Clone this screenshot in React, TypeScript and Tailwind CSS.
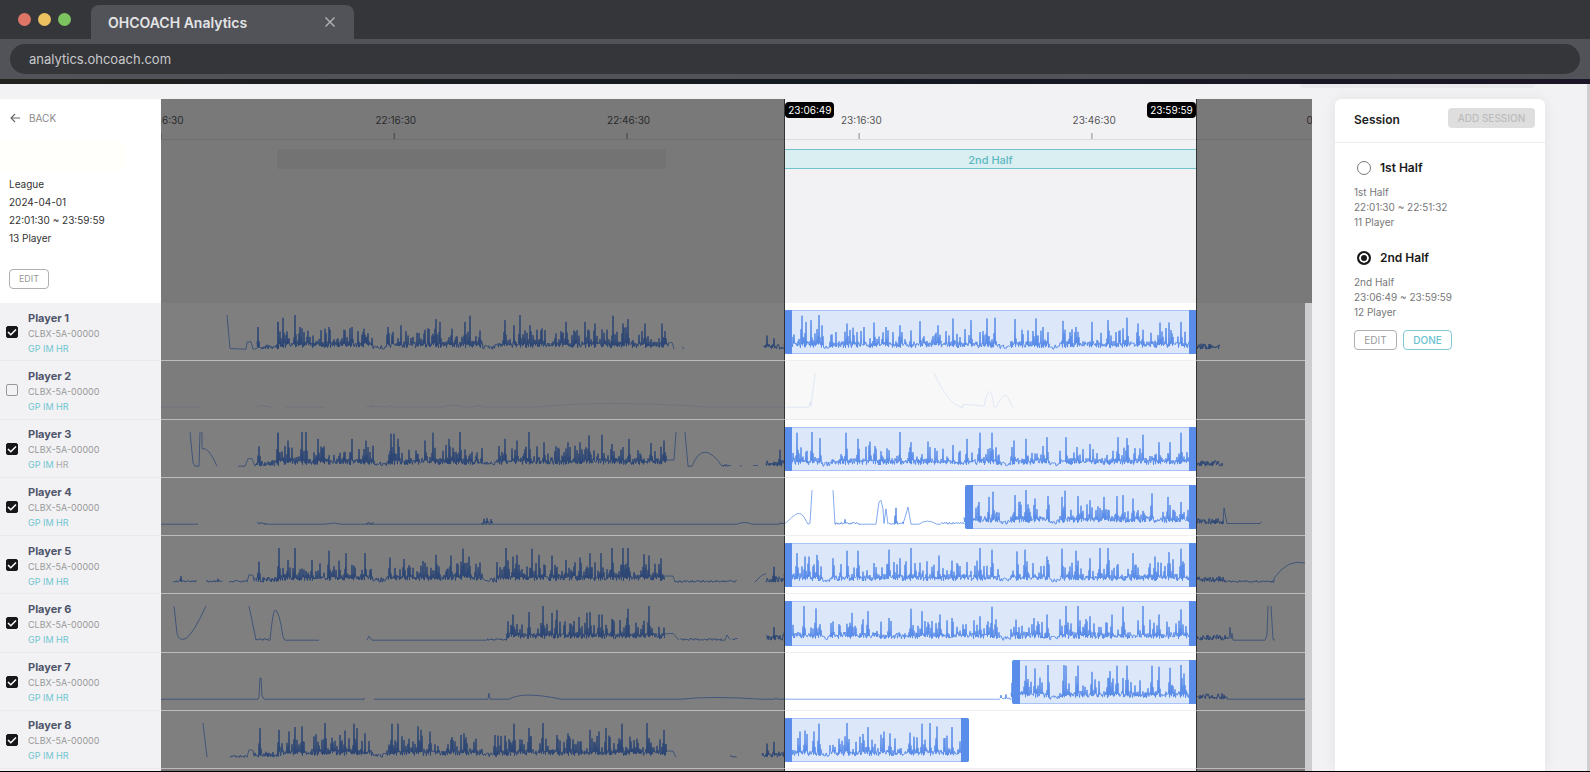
import { useState } from 'react'

type Session = {
  id: string
  name: string
  start: string
  end: string
  players: number
}

type Peak = [x: number, height: number]

type Segment = {
  from: number
  to: number
  kind: 'busy' | 'low' | 'tiny'
}

type Player = {
  name: string
  checked: boolean
  hr: boolean
  range?: [string, string]
  segments: Segment[]
  peaks: Peak[]
  strokes: string
}

// Visible window of the timeline, counted in minutes of the day
const AXIS_START = 21 * 60 + 46.5
const UNITS_PER_MINUTE = 7.76
const AXIS_UNITS = 1151

const TICKS = ['21:46:30', '22:16:30', '22:46:30', '23:16:30', '23:46:30', '24:16:30']

const SESSIONS: Session[] = [
  { id: 'first', name: '1st Half', start: '22:01:30', end: '22:51:32', players: 11 },
  { id: 'second', name: '2nd Half', start: '23:06:49', end: '23:59:59', players: 12 },
]

const QUIET = [[211, 226], [321, 336], [660, 669], [838, 850], [888, 899]]

const busy = (from: number, to: number): Segment => ({ from, to, kind: 'busy' })
const low = (from: number, to: number): Segment => ({ from, to, kind: 'low' })
const tiny = (from: number, to: number): Segment => ({ from, to, kind: 'tiny' })

// Stroke paths and peaks are in timeline units across and 0-100 percent up
const PLAYERS: Player[] = [
  {
    name: 'Player 1',
    checked: true,
    hr: true,
    range: ['23:06:49', '23:59:59'],
    segments: [low(96, 117), busy(117, 507), low(603, 623), busy(623, 1034), low(1034, 1058)],
    peaks: [[97, 65], [117, 80], [122, 92], [134, 100], [139, 65], [164, 60], [168, 65], [184, 55], [191, 65], [203, 60], [227, 65], [240, 70], [275, 88], [279, 80], [291, 60], [304, 80], [309, 98], [319, 55], [344, 85], [353, 70], [359, 100], [369, 70], [405, 80], [424, 80], [434, 75], [452, 98], [462, 75], [467, 88], [484, 75], [501, 75], [606, 40], [613, 32], [641, 98], [645, 80], [650, 85], [658, 100], [661, 70], [686, 75], [703, 65], [713, 78], [725, 65], [739, 70], [759, 82], [777, 70], [792, 90], [810, 85], [826, 90], [834, 92], [854, 88], [875, 90], [887, 50], [902, 83], [915, 65], [931, 80], [947, 85], [966, 92], [977, 75], [999, 78], [1008, 78], [1020, 80]],
    strokes: 'M66 100L69 2L85 0L86 20L90 22L92 0L96 2M507 18L511 20L513 0M521 8L523 0',
  },
  {
    name: 'Player 2',
    checked: false,
    hr: true,
    segments: [tiny(96, 110), tiny(205, 230)],
    peaks: [],
    strokes: 'M0 0H40M125 0H165M230 0H280Q292 10 303 0H310Q318 8 325 0H375Q440 22 549 0H648L649 15L650 2L654 100M773 100Q787 10 800 0H802V8Q812 8 823 3Q829 90 833 0L836 2Q844 60 849 15L852 0',
  },
  {
    name: 'Player 3',
    checked: true,
    hr: false,
    range: ['23:06:49', '23:59:59'],
    segments: [low(94, 117), busy(117, 505), tiny(561, 569), low(605, 623), busy(623, 1034), low(1034, 1061)],
    peaks: [[98, 58], [117, 98], [127, 75], [141, 100], [145, 100], [157, 80], [191, 80], [205, 75], [212, 60], [230, 95], [233, 95], [237, 80], [264, 75], [272, 98], [288, 80], [299, 100], [344, 80], [356, 75], [368, 100], [383, 70], [407, 70], [419, 70], [428, 90], [441, 92], [451, 65], [468, 80], [490, 68], [503, 75], [619, 48], [636, 98], [651, 100], [659, 82], [685, 98], [697, 80], [709, 72], [739, 100], [750, 70], [767, 72], [792, 62], [806, 80], [819, 98], [831, 98], [853, 75], [865, 80], [886, 85], [905, 85], [929, 65], [957, 85], [966, 82], [982, 92], [998, 70], [1009, 70], [1020, 98]],
    strokes: 'M29 100L32 10L34 0H38L39 100M41 100V52Q48 56 56 0M77 0H84L87 22L91 22L94 0M505 18H513L515 100M524 100L527 0H531Q542 82 561 0M579 1H581M592 2H597',
  },
  {
    name: 'Player 4',
    checked: true,
    hr: true,
    range: ['23:30:09', '23:59:59'],
    segments: [tiny(96, 104), tiny(205, 212), tiny(320, 331), tiny(618, 623), tiny(674, 698), tiny(728, 742), tiny(780, 803), busy(803, 1034), low(1034, 1062)],
    peaks: [[323, 16], [326, 18], [330, 15], [684, 14], [735, 48], [743, 25], [818, 65], [828, 80], [832, 95], [854, 85], [865, 100], [874, 75], [887, 82], [901, 80], [904, 98], [917, 82], [929, 70], [943, 80], [956, 82], [962, 85], [972, 75], [991, 90], [1007, 80], [1020, 65]],
    strokes: 'M0 0H37M104 0H164Q173 7 180 0H576Q584 10 591 0H618M623 0C632 18 638 55 645 10L647 0L649 3L651 100M672 100L674 0M698 0H715L718 65L720 70L722 45L723 2L725 45L727 0M742 0L747 50L750 0H758Q766 18 776 0H780M1062 5L1063 48L1066 2H1099L1101 8',
  },
  {
    name: 'Player 5',
    checked: true,
    hr: true,
    range: ['23:06:49', '23:59:59'],
    segments: [tiny(12, 35), tiny(45, 61), tiny(68, 86), low(93, 117), busy(117, 503), tiny(514, 575), low(605, 623), busy(623, 1034), low(1034, 1064), tiny(1064, 1112)],
    peaks: [[20, 18], [57, 10], [98, 60], [118, 100], [127, 65], [134, 100], [151, 65], [168, 92], [185, 85], [204, 85], [229, 72], [243, 68], [275, 80], [290, 78], [302, 98], [308, 75], [345, 100], [352, 75], [356, 80], [371, 98], [378, 80], [391, 78], [405, 65], [419, 72], [429, 85], [440, 85], [451, 100], [462, 100], [467, 100], [483, 82], [488, 78], [500, 70], [613, 45], [636, 85], [644, 75], [648, 75], [656, 80], [672, 70], [686, 92], [697, 92], [728, 95], [739, 70], [750, 100], [778, 78], [819, 100], [831, 95], [856, 90], [864, 95], [886, 75], [901, 98], [915, 92], [929, 70], [939, 100], [947, 100], [972, 85], [994, 75], [1008, 88], [1020, 98]],
    strokes: 'M86 0L88 22L92 20L93 2M503 18H512L514 0M594 0Q600 22 605 25M1112 0H1113V12Q1127 70 1144 56',
  },
  {
    name: 'Player 6',
    checked: true,
    hr: true,
    range: ['23:06:49', '23:59:59'],
    segments: [tiny(95, 107), tiny(326, 346), busy(346, 503), tiny(519, 560), tiny(571, 576), low(605, 623), busy(623, 1034), low(1034, 1066)],
    peaks: [[347, 55], [352, 75], [368, 82], [382, 100], [391, 80], [396, 88], [418, 68], [426, 80], [429, 82], [438, 75], [441, 75], [451, 62], [467, 92], [488, 100], [613, 38], [643, 100], [655, 93], [691, 80], [707, 85], [728, 65], [750, 92], [761, 85], [779, 75], [819, 70], [831, 98], [855, 60], [873, 65], [886, 75], [905, 100], [917, 100], [929, 70], [951, 75], [962, 98], [982, 100], [998, 75], [1020, 90]],
    strokes: 'M13 100L16 20Q18 -5 25 5Q32 18 45 100M88 100Q92 45 95 0M107 0H109Q112 88 114 88Q118 90 122 10L124 0H158M206 0L208 12L211 0H326M503 18L512 20L518 0M560 0H564L566 15L569 2M1066 5H1068L1069 38L1070 5L1071 20L1072 0H1104L1106 15L1107 100M1110 100L1112 2L1114 0',
  },
  {
    name: 'Player 7',
    checked: true,
    hr: true,
    range: ['23:36:12', '23:59:59'],
    segments: [tiny(839, 850), busy(850, 1034), low(1034, 1066)],
    peaks: [[840, 12], [845, 14], [865, 98], [874, 90], [887, 100], [903, 100], [905, 98], [917, 98], [931, 80], [949, 82], [956, 98], [966, 98], [991, 98], [998, 95], [1009, 92], [1020, 100], [1023, 75]],
    strokes: 'M0 0H97L98 6L99 62H100L101 10L103 0H203V4M213 0H327L328 18L329 0H348Q362 24 400 0H520Q550 10 600 0L614 0L615 4L616 0H839M1066 0H1144',
  },
  {
    name: 'Player 8',
    checked: true,
    hr: true,
    range: ['23:06:49', '23:30:36'],
    segments: [tiny(69, 86), low(93, 117), busy(117, 505), tiny(569, 575), low(601, 623), busy(623, 799)],
    peaks: [[99, 85], [118, 80], [128, 75], [134, 88], [141, 90], [164, 100], [179, 65], [184, 78], [193, 98], [196, 85], [204, 70], [231, 98], [237, 98], [257, 90], [260, 80], [269, 75], [300, 65], [303, 70], [334, 65], [353, 98], [368, 85], [382, 100], [396, 65], [407, 70], [429, 80], [438, 75], [445, 85], [461, 98], [469, 60], [486, 100], [503, 80], [606, 40], [613, 45], [639, 75], [644, 78], [653, 75], [658, 98], [686, 100], [702, 68], [707, 88], [723, 75], [729, 70], [749, 72], [761, 98], [769, 100], [776, 90], [791, 88]],
    strokes: 'M42 100L46 0M86 0L88 22L92 20L93 2M505 18H512L515 0',
  },
]

function toUnits(time: string) {
  const [h, m, s] = time.split(':').map(Number)
  return (h * 60 + m + s / 60 - AXIS_START) * UNITS_PER_MINUTE
}

function toPercent(time: string) {
  return `${(toUnits(time) / AXIS_UNITS) * 100}%`
}

function rangeStyle(start: string, end: string) {
  return {
    left: toPercent(start),
    width: `${((toUnits(end) - toUnits(start)) / AXIS_UNITS) * 100}%`,
  }
}

function createRandom(seed: number) {
  let state = seed
  return () => {
    state = (state * 1664525 + 1013904223) % 4294967296
    return state / 4294967296
  }
}

function buildWave(player: Player, seed: number) {
  const random = createRandom(seed * 7919 + 17)
  const peaks = new Map<number, number>(player.peaks)
  let d = ''

  for (const { from, to, kind } of player.segments) {
    for (let x = from; x <= to; x++) {
      const quiet = QUIET.some(([a, b]) => x > a && x < b)
      const near = peaks.get(x - 1) ?? peaks.get(x + 1) ?? 0
      const spike = random()
      let h = random() * 5
      let dip = h

      if (kind === 'low') {
        h = 2 + random() * 15
        dip = random() * h
      }
      if (kind === 'busy') {
        h = quiet ? random() * 13 : 8 + random() * 16
        dip = quiet ? h : 4 + random() * 14
        // the first half was played at a denser pace than the second
        const rate = x < 510 ? 0.5 : 0.64
        if (!quiet && spike > rate) h += random() * 44
      }
      h = peaks.get(x) ?? Math.max(h, near * (0.15 + random() * 0.4))
      d += `${x === from ? 'M' : 'L'}${x} ${Math.round(h)}L${x + 0.5} ${Math.round(dip)}`
    }
  }
  return d
}

const WAVES = PLAYERS.map((player, i) => buildWave(player, i + 1))

export default function App() {
  const [checked, setChecked] = useState(PLAYERS.map(p => p.checked))
  const [sessionId, setSessionId] = useState('second')
  const active = SESSIONS.find(s => s.id === sessionId) ?? SESSIONS[1]

  const toggle = (index: number) => setChecked(checked.map((c, i) => (i === index ? !c : c)))

  return (
    <div className="flex min-h-screen flex-col border-b border-black bg-[#f2f2f5] font-['Inter',sans-serif] text-[#333]">
      <BrowserBar />

      <main className="flex flex-1">
        {/* Timeline */}
        <section className="relative mt-[15px] flex min-w-0 flex-1 flex-col overflow-hidden pb-0.5">
          <div className="flex h-[204px]">
            <MatchInfo />
            <div className="relative flex-1 overflow-hidden">
              <div className="relative h-[41px] border-b border-[#dcdcde]">
                {TICKS.map(time => (
                  <div
                    key={time}
                    className="absolute bottom-0 flex -translate-x-1/2 flex-col items-center gap-[5px] text-[10px] leading-4 text-[#555]"
                    style={{ left: toPercent(time) }}
                  >
                    <span className="pl-1">{time.replace('24:', '00:')}</span>
                    <span className="h-1.5 w-px bg-[#888]" />
                  </div>
                ))}
              </div>
              {SESSIONS.map(s => (
                <div
                  key={s.id}
                  className={
                    s.id === active.id
                      ? 'absolute top-[50px] h-5 border border-[#6fc3cb] bg-[#d9eff1] text-center text-[11px] leading-5 font-medium text-[#5bb8c2]'
                      : 'absolute top-[50px] h-5 rounded-xs bg-[#e6e6e9]'
                  }
                  style={rangeStyle(s.start, s.end)}
                >
                  {s.id === active.id && s.name}
                </div>
              ))}
            </div>
          </div>

          <div className="flex flex-1 flex-col">
            {PLAYERS.map((player, i) => (
              <div key={player.name} className="relative flex min-h-[58px] flex-1">
                <PlayerCell player={player} checked={checked[i]} onToggle={() => toggle(i)} />
                <PlayerTrack player={player} wave={WAVES[i]} enabled={checked[i]} />
                <div className="absolute inset-x-0 bottom-0 z-10 h-px bg-[#e4e4e6]/60" />
              </div>
            ))}
          </div>

          <SelectionOverlay session={active} />
        </section>

        <SessionPanel active={sessionId} onSelect={setSessionId} />
        <div className="w-[3px] bg-[#cfcfd2]" />
      </main>
    </div>
  )
}

function BrowserBar() {
  return (
    <header className="text-[#e4e4e6]">
      <div className="flex h-[39px] items-end bg-[#35363a] pl-[18px]">
        <div className="flex gap-[7px] self-center">
          <span className="size-[13px] rounded-full bg-[#de7566]" />
          <span className="size-[13px] rounded-full bg-[#ecc15f]" />
          <span className="size-[13px] rounded-full bg-[#7cc35f]" />
        </div>
        <div className="ml-5 flex h-[34px] w-[263px] items-center justify-between rounded-t-lg bg-[#525358] pr-[18px] pl-[17px]">
          <span className="text-[14px] font-semibold">OHCOACH Analytics</span>
          <button aria-label="Close tab" className="text-[#b4b4b7]">
            <svg className="size-3" viewBox="0 0 12 12" fill="none" stroke="currentColor" strokeWidth="1.4">
              <path d="M1.5 1.5l9 9M10.5 1.5l-9 9" />
            </svg>
          </button>
        </div>
      </div>
      <div className="h-10 bg-[#525358] px-2.5 py-[5px]">
        <input
          aria-label="Address"
          defaultValue="analytics.ohcoach.com"
          className="block h-[30px] w-full rounded-full bg-[#35363a] px-[19px] text-[13px] text-[#c9c9cb] outline-none"
        />
      </div>
      <div className="h-[5px] bg-linear-to-r from-[#23221f] via-[#131a20] to-[#1c1527]" />
    </header>
  )
}

function MatchInfo() {
  return (
    <div className="flex w-[161px] flex-col items-start bg-white">
      <a href="#back" className="mt-[11px] ml-2.5 flex items-center gap-[9px] text-[10px] leading-4 text-[#8a8a8a]">
        <svg className="size-2.5" viewBox="0 0 10 10" fill="none" stroke="#666" strokeWidth="1.1">
          <path d="M10 5H1M5 1L1 5l4 4" />
        </svg>
        BACK
      </a>
      <div className="mt-4 h-7 w-[126px] bg-[#fffffc]" />
      <div className="mt-[5px] ml-[9px] text-[10px] leading-[18px] text-[#333]">
        <p>League</p>
        <p>2024-04-01</p>
        <p>22:01:30 ~ 23:59:59</p>
        <p>13 Player</p>
      </div>
      <button className="mt-[22px] ml-[9px] h-5 w-10 rounded-sm border border-[#b0b0b0] text-[9px] text-[#999]">EDIT</button>
    </div>
  )
}

function PlayerCell({ player, checked, onToggle }: {
  player: Player
  checked: boolean
  onToggle: () => void
}) {
  return (
    <label className="flex w-[161px] items-center gap-2.5 bg-[#f2f2f5] pl-1.5">
      <span className="relative size-3">
        <input
          type="checkbox"
          checked={checked}
          onChange={onToggle}
          className="block size-3 appearance-none rounded-xs border border-[#999] checked:border-[#17171a] checked:bg-[#17171a]"
        />
        {checked && (
          <svg className="absolute inset-0 size-3" viewBox="0 0 12 12" fill="none" stroke="white" strokeWidth="1.5">
            <path d="M2 6l2.8 2.8L10 3.4" />
          </svg>
        )}
      </span>
      <span className="flex flex-col pt-0.5 text-[9px] leading-[15px] text-[#999]">
        <span className="text-[11px] font-bold text-[#50566b]">{player.name}</span>
        <span>CLBX-5A-00000</span>
        <span className="text-[#6fc5cf]">
          GP IM <span className={player.hr ? '' : 'text-[#aaa]'}>HR</span>
        </span>
      </span>
    </label>
  )
}

function PlayerTrack({ player, wave, enabled }: {
  player: Player
  wave: string
  enabled: boolean
}) {
  return (
    <div className={`relative flex-1 overflow-hidden ${enabled ? 'bg-white' : 'bg-[#f8f8f8]'}`}>
      {player.range && enabled && (
        <div
          className="absolute top-[7px] bottom-[7px] rounded-xs border-y border-[#a9c3f6] bg-[#dce7fa]"
          style={rangeStyle(player.range[0], player.range[1])}
        />
      )}
      <svg
        className={`absolute inset-0 size-full ${enabled ? '' : 'opacity-20'}`}
        viewBox={`0 0 ${AXIS_UNITS} 58`}
        preserveAspectRatio="none"
      >
        <g transform="translate(0 46) scale(1 -0.34)" fill="none" stroke="#5a8de9">
          <path d={player.strokes} strokeOpacity="0.75" vectorEffect="non-scaling-stroke" />
          <path d={wave} vectorEffect="non-scaling-stroke" />
        </g>
      </svg>
      {player.range && enabled && (
        <div
          className="absolute top-[7px] bottom-[7px] flex justify-between"
          style={rangeStyle(player.range[0], player.range[1])}
        >
          <span className="w-2 rounded-l-xs bg-[#5a8de9]" />
          <span className="w-2 rounded-r-xs bg-[#5a8de9]" />
        </div>
      )}
    </div>
  )
}

function SelectionOverlay({ session }: { session: Session }) {
  return (
    <div className="pointer-events-none absolute inset-y-0 right-0 left-[161px]">
      <div className="absolute inset-y-0 left-0 bg-black/50" style={{ width: toPercent(session.start) }} />
      <div className="absolute inset-y-0 right-0 bg-black/50" style={{ left: toPercent(session.end) }} />
      <div
        className="absolute inset-y-0 flex items-start justify-between border-x border-[#333] pt-[3px] text-[10px] text-white"
        style={rangeStyle(session.start, session.end)}
      >
        <span className="h-4 rounded-sm bg-black px-[3px] leading-4">{session.start}</span>
        <span className="h-4 rounded-sm bg-black px-[3px] leading-4">{session.end}</span>
      </div>
      <div className="absolute top-[204px] right-0 bottom-0 z-20 w-[7px] bg-[#cdcdcf]" />
    </div>
  )
}

function SessionPanel({ active, onSelect }: {
  active: string
  onSelect: (id: string) => void
}) {
  return (
    <aside className="relative flex pt-[15px] pr-[42px] pl-[23px]">
      <div className="absolute top-0 -left-3 h-1 w-[235px] rounded-b-sm bg-[#eaeaec]" />
      <div className="relative w-[210px] rounded-t-md bg-white shadow-[0_0_14px_rgba(0,0,0,0.07)]">
        <div className="flex h-11 items-start justify-between border-b border-[#ececee] pt-[9px] pr-2.5 pl-[19px]">
          <h2 className="text-[12px] leading-6 font-semibold text-[#222]">Session</h2>
          <button disabled className="h-5 w-[87px] rounded-sm bg-[#dedede] text-[10px] font-medium text-[#bcbcbc]">
            ADD SESSION
          </button>
        </div>
        <div className="flex flex-col gap-[18px] px-[19px] pt-[15px]">
          {SESSIONS.map(s => (
            <div key={s.id}>
              <label className="flex h-5 items-center gap-[9px] pl-[3px] text-[12px] font-semibold text-[#1a1a1a]">
                <input
                  type="radio"
                  name="session"
                  checked={active === s.id}
                  onChange={() => onSelect(s.id)}
                  className="size-[14px] appearance-none rounded-full border border-[#777] bg-white checked:border-2 checked:border-[#1a1a1a] checked:bg-[#1a1a1a] checked:shadow-[inset_0_0_0_2px_white]"
                />
                {s.name}
              </label>
              <div className="mt-[7px] text-[10px] leading-[15px] text-[#777]">
                <p>{s.name}</p>
                <p>{s.start} ~ {s.end}</p>
                <p>{s.players} Player</p>
              </div>
              {active === s.id && (
                <div className="mt-2.5 flex gap-1.5 text-[10px]">
                  <button className="h-5 w-[43px] rounded-sm border border-[#b0b0b0] text-[#999]">EDIT</button>
                  <button className="h-5 w-[49px] rounded-sm border border-[#7fcbd5] font-medium text-[#6cc3cf]">DONE</button>
                </div>
              )}
            </div>
          ))}
        </div>
      </div>
    </aside>
  )
}
